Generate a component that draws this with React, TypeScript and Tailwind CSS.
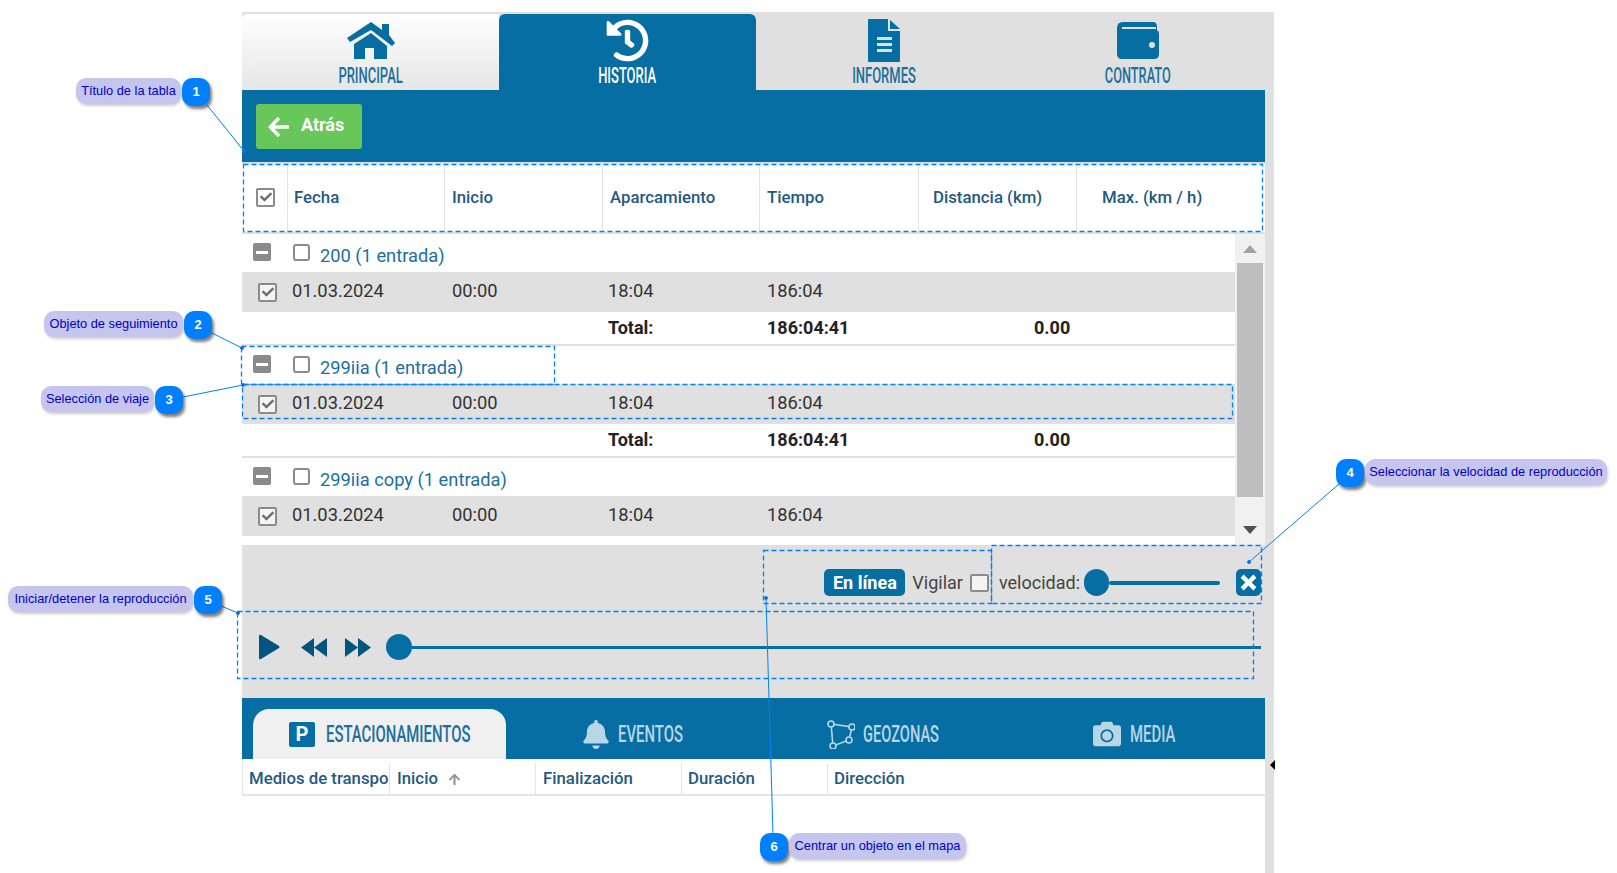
import { FaArrowUp, FaBell, FaCamera, FaCheck, FaHistory } from 'react-icons/fa';

const HouseIcon = () => (
  <svg viewBox="0 0 48 39" className="w-[48px] h-[39px] fill-[#066ea3]">
    <path d="M0 17 L24 1 L35 9 L35 3 L42 3 L42 14 L48 22 L45 25 L24 9 L3 21 Z" />
    <path d="M7 23 L24 12 L40 25 L40 38 L27 38 L27 27 L18 27 L18 38 L7 38 Z" />
  </svg>
);

const FileIcon = () => (
  <svg viewBox="0 0 32 43" className="w-[32px] h-[43px]">
    <path d="M1 0 H20 V12 H32 V42 Q32 43 31 43 H1 Q0 43 0 42 V1 Q0 0 1 0 Z" className="fill-[#066ea3]" />
    <path d="M22 1 L32 10 H22 Z" className="fill-[#066ea3]" />
    <path d="M9 18 H24 V21 H9 Z M9 24 H24 V27 H9 Z M9 30 H24 V33 H9 Z" className="fill-[#e0e0e0]" />
  </svg>
);

const WalletIcon = () => (
  <svg viewBox="0 0 42 37" className="w-[42px] h-[37px]">
    <path d="M6 0 H36 Q40 0 40 5 V8 Q42 9 42 12 V32 Q42 37 37 37 H5 Q0 37 0 32 V6 Q0 0 6 0 Z" className="fill-[#066ea3]" />
    <rect x="5" y="5" width="34" height="2" className="fill-[#e0e0e0]" />
    <circle cx="35" cy="23" r="3" className="fill-[#e0e0e0]" />
  </svg>
);

const GeoIcon = () => (
  <svg viewBox="0 0 28 29" className="w-[28px] h-[29px] fill-none stroke-[#b9d6e6] stroke-[1.6]">
    <path d="M4 4 L25 7 L22 20 L6 26 Z" />
    <circle cx="4" cy="4" r="3" className="fill-[#066ea3]" />
    <circle cx="25" cy="7" r="3" className="fill-[#066ea3]" />
    <circle cx="22" cy="20" r="3" className="fill-[#066ea3]" />
    <circle cx="6" cy="26" r="3" className="fill-[#066ea3]" />
  </svg>
);

const CheckBox = ({ checked = false, className = '' }: { checked?: boolean; className?: string }) => (
  <span className={`flex items-center justify-center border-2 border-[#8b8b8b] rounded-[2px] bg-[#f4f4f4] ${className}`}>
    {checked && <FaCheck className="text-[#6e6e6e] text-[12px]" />}
  </span>
);

const MinusBox = () => (
  <span className="flex items-center justify-center w-[18px] h-[18px] rounded-[2px] bg-[#8b8b8b]">
    <span className="w-[12px] h-[3px] bg-white" />
  </span>
);

const TopTab = ({ label, icon, scale, className }: { label: string; icon: React.ReactNode; scale: string; className: string }) => (
  <div className={`flex flex-col items-center ${className}`}>
    <div className="h-[49px] flex items-center pt-[4px]">{icon}</div>
    <span className={`text-[22px] leading-[26px] font-medium whitespace-nowrap ${scale}`}>{label}</span>
  </div>
);

const GroupRow = ({ label }: { label: string }) => (
  <div className="h-[38px] flex items-center pl-[11px] pb-[2px]">
    <MinusBox />
    <CheckBox className="ml-[22px] w-[17px] h-[17px] bg-white rounded-[3px]" />
    <span className="ml-[10px] pt-[7px] text-[18.3px] text-[#1c6f9e]">{label}</span>
  </div>
);

const TripRow = () => (
  <div className="h-[40px] pb-[2px] grid grid-cols-[50px_160px_156px_159px_1fr] items-center bg-[#e0e0e0] text-[18.3px] text-[#333]">
    <CheckBox checked className="ml-[16px] mt-[2px] w-[19px] h-[19px]" />
    <span>01.03.2024</span>
    <span>00:00</span>
    <span>18:04</span>
    <span>186:04</span>
  </div>
);

const TotalRow = () => (
  <div className="h-[34px] pb-[2px] border-b-2 border-[#e0e0e0] grid grid-cols-[366px_159px_267px_1fr] items-center text-[18px] font-bold text-[#222]">
    <span />
    <span>Total:</span>
    <span>186:04:41</span>
    <span>0.00</span>
  </div>
);

const Callout = ({ n, text, reverse = false, className, pill }: { n: number; text: string; reverse?: boolean; className: string; pill: string }) => (
  <div className={`absolute flex gap-px ${reverse ? 'flex-row-reverse' : ''} ${className}`}>
    <div className={`h-[26px] flex items-center justify-center rounded-[10px] bg-[#c5c5ee] shadow-[1px_2px_3px_rgba(0,0,0,0.2)] text-[12.8px] text-[#0000c8] whitespace-nowrap font-['Liberation_Sans',sans-serif] ${pill}`}>
      {text}
    </div>
    <div className="w-[28px] h-[28px] flex items-center justify-center rounded-[10px] bg-[#0080ff] shadow-[2px_3px_3px_rgba(0,0,0,0.5)] text-white text-[13px] font-bold font-['Liberation_Sans',sans-serif]">
      {n}
    </div>
  </div>
);

const headerCols = [
  ['w-[157px] pl-[6px]', 'Fecha'],
  ['w-[158px] pl-[7px]', 'Inicio'],
  ['w-[157px] pl-[7px]', 'Aparcamiento'],
  ['w-[159px] pl-[7px]', 'Tiempo'],
  ['w-[158px] pl-[14px]', 'Distancia (km)'],
  ['flex-1 pl-[25px]', 'Max. (km / h)'],
];

const bottomCols = [
  ['w-[147px] pl-[6px] whitespace-nowrap', 'Medios de transpo'],
  ['w-[146px] pl-[7px] flex items-center gap-[10px]', 'Inicio'],
  ['w-[146px] pl-[7px]', 'Finalización'],
  ['w-[146px] pl-[6px]', 'Duración'],
  ['flex-1 pl-[6px]', 'Dirección'],
];

export default function App() {
  return (
    <div className="relative w-[1617px] h-[873px] overflow-hidden bg-white font-['Roboto',sans-serif]">
      <div className="ml-[242px] pt-[12px]">
        <div className="w-[1032px] h-[861px] pt-[2px] pr-[9px] bg-[#e0e0e0]">
          {/* main tabs */}
          <div className="grid grid-cols-[257px_257px_256px_252px] h-[76px]">
            <TopTab label="PRINCIPAL" icon={<HouseIcon />} scale="scale-x-[0.59]" className="rounded-tl-[5px] bg-linear-to-b from-white to-[#e6e6e6] text-[#1c6f9e]" />
            <TopTab label="HISTORIA" icon={<FaHistory className="text-white text-[43px]" />} scale="scale-x-[0.59]" className="rounded-t-[6px] bg-[#066ea3] text-white" />
            <TopTab label="INFORMES" icon={<FileIcon />} scale="scale-x-[0.59]" className="text-[#1c6f9e]" />
            <TopTab label="CONTRATO" icon={<WalletIcon />} scale="scale-x-[0.58]" className="text-[#1c6f9e]" />
          </div>

          <div className="h-[72px] pl-[14px] pt-[14px] bg-[#066ea3]">
            <button className="w-[106px] h-[45px] flex items-center rounded-[3px] bg-[#68c75a] text-white text-[18px] font-bold">
              <svg viewBox="0 0 22 22" className="ml-[12px] w-[22px] h-[22px] fill-none stroke-white stroke-[3.6]">
                <path d="M21 11 H4 M11 2 L2.5 11 L11 20" />
              </svg>
              <span className="ml-[11px] -mt-[4px]">Atrás</span>
            </button>
          </div>

          {/* table header */}
          <div className="mt-[2px] h-[68px] flex items-center bg-white text-[16.8px] font-medium text-[#1f5a80]">
            <div className="w-[46px] h-full flex items-center pl-[14px] pb-[2px] border-r border-[#e3e3e3]">
              <CheckBox checked className="w-[19px] h-[19px] bg-white" />
            </div>
            {headerCols.map(([cls, text], i) => (
              <div key={text} className={`h-full flex items-center ${i < 5 ? 'border-r border-[#e3e3e3]' : ''} ${cls}`}>
                {text}
              </div>
            ))}
          </div>

          {/* trips list */}
          <div className="mt-[2px] h-[311px] flex bg-white overflow-hidden">
            <div className="w-[993px]">
              <GroupRow label="200 (1 entrada)" />
              <TripRow />
              <TotalRow />
              <GroupRow label="299iia (1 entrada)" />
              <TripRow />
              <TotalRow />
              <GroupRow label="299iia copy (1 entrada)" />
              <TripRow />
            </div>
            <div className="w-[30px] flex flex-col items-center bg-[#f1f1f1] pl-[2px] pr-[2px]">
              <div className="h-[29px] flex items-center justify-center">
                <span className="w-0 h-0 border-x-[7px] border-x-transparent border-b-[8px] border-b-[#a3a3a3]" />
              </div>
              <div className="w-full h-[234px] bg-[#bdbdbd]" />
              <div className="pt-[29px] flex justify-center">
                <span className="w-0 h-0 border-x-[7px] border-x-transparent border-t-[8px] border-t-[#505050]" />
              </div>
            </div>
          </div>

          {/* player controls */}
          <div className="h-[153px] pt-[24px] text-[18px] text-[#444]">
            <div className="h-[27px] pr-[4px] flex items-center justify-end">
              <span className="w-[81px] h-[27px] flex items-center justify-center rounded-[5px] bg-[#066ea3] text-white font-bold">En línea</span>
              <span className="ml-[7px]">Vigilar</span>
              <CheckBox className="ml-[7px] w-[19px] h-[18px]" />
              <span className="ml-[10px]">velocidad:</span>
              <div className="ml-[4px] w-[136px] flex items-center">
                <span className="w-[25px] h-[27px] rounded-full bg-[#066ea3]" />
                <span className="flex-1 h-[4px] rounded-full bg-[#066ea3]" />
              </div>
              <span className="ml-[16px] w-[25px] h-[27px] flex items-center justify-center rounded-[5px] bg-[#066ea3]">
                <svg viewBox="0 0 16 16" className="w-[17px] h-[17px] stroke-white stroke-[4] fill-none"><path d="M2 2 L14 14 M14 2 L2 14" /></svg>
              </span>
            </div>
            <div className="mt-[38px] h-[26px] pl-[16px] flex items-center">
              <svg viewBox="0 0 22 26" className="w-[22px] h-[26px] fill-[#04547f]"><path d="M1 2 Q1 0 3 1 L21 12 Q22 13 21 14 L3 25 Q1 26 1 24 Z" /></svg>
              <svg viewBox="0 0 26 19" className="ml-[21px] w-[26px] h-[19px] fill-[#04547f]"><path d="M13 0 V19 L0 9.5 Z M26 0 V19 L13 9.5 Z" /></svg>
              <svg viewBox="0 0 26 19" className="ml-[18px] w-[26px] h-[19px] fill-[#04547f]"><path d="M0 0 V19 L13 9.5 Z M13 0 V19 L26 9.5 Z" /></svg>
              <span className="ml-[15px] w-[26px] h-[26px] rounded-full bg-[#066ea3]" />
              <span className="flex-1 h-[3px] mr-[4px] bg-[#066ea3]" />
            </div>
          </div>

          {/* lower tabs */}
          <div className="h-[61px] pt-[11px] pl-[11px] grid grid-cols-4 bg-[#066ea3] text-[#b9d6e6] text-[24px] font-medium">
            <div className="w-[253px] flex items-center pl-[36px] rounded-t-[16px] bg-[#f0f0f0] text-[#1c6f9e]">
              <span className="w-[26px] h-[25px] flex items-center justify-center rounded-[2px] bg-[#066ea3] text-white text-[20px] font-bold">P</span>
              <span className="ml-[11px] w-[144px] origin-left scale-x-[0.62] whitespace-nowrap">ESTACIONAMIENTOS</span>
            </div>
            <div className="flex items-center pl-[77px]">
              <FaBell className="w-[26px] h-[29px]" />
              <span className="ml-[9px] w-[64px] origin-left scale-x-[0.62] whitespace-nowrap">EVENTOS</span>
            </div>
            <div className="flex items-center pl-[68px]">
              <GeoIcon />
              <span className="ml-[8px] w-[77px] origin-left scale-x-[0.61] whitespace-nowrap">GEOZONAS</span>
            </div>
            <div className="flex items-center pl-[80px]">
              <FaCamera className="w-[30px] h-[28px]" />
              <span className="ml-[8px] w-[46px] origin-left scale-x-[0.62] whitespace-nowrap">MEDIA</span>
            </div>
          </div>

          <div className="h-[114px] bg-white">
            <div className="h-[37px] pt-[4px] flex items-center border-b-2 border-l border-[#e5e5e5] text-[16.8px] font-medium text-[#1f5a80]">
              {bottomCols.map(([cls, text], i) => (
                <div key={text} className={`h-full flex items-center ${i < 4 ? 'border-r border-[#e5e5e5]' : ''} ${cls}`}>
                  {text}
                  {i === 1 && <FaArrowUp className="text-[#9a9089] text-[13px] mt-[2px]" />}
                </div>
              ))}
            </div>
          </div>
        </div>
      </div>

      {/* splitter arrow */}
      <span className="absolute left-[1270px] top-[760px] w-0 h-0 border-y-[5px] border-y-transparent border-r-[5px] border-r-black" />

      {/* help annotations */}
      <svg viewBox="0 0 1617 873" className="absolute inset-0 w-[1617px] h-[873px] pointer-events-none stroke-[#0080ff] fill-[#4a4ad0]">
        <g className="fill-none stroke-[1.3] [stroke-dasharray:5_3]">
          <rect x="243.5" y="164.5" width="1019" height="67" />
          <rect x="241.5" y="346.5" width="313" height="38" />
          <rect x="242.5" y="384.5" width="990" height="34" />
          <rect x="763.5" y="550.5" width="228" height="53" />
          <rect x="991.5" y="545.5" width="270" height="58" />
          <rect x="237.5" y="611.5" width="1016" height="67" />
        </g>
        <line x1="207" y1="105" x2="244" y2="151" />
        <circle cx="244" cy="151" r="1.5" />
        <line x1="212" y1="333" x2="242" y2="348" />
        <circle cx="242" cy="348" r="1.5" />
        <line x1="183" y1="397" x2="243" y2="385" />
        <circle cx="243" cy="385" r="1.5" />
        <line x1="1339" y1="484" x2="1249" y2="562" />
        <circle cx="1249" cy="562" r="1.5" />
        <line x1="221" y1="606" x2="238" y2="613" />
        <circle cx="238" cy="613" r="1.5" />
        <line x1="773" y1="834" x2="766" y2="598" />
        <circle cx="766" cy="598" r="1.5" />
      </svg>

      <Callout n={1} text="Título de la tabla" className="left-[76px] top-[78px]" pill="w-[105px]" />
      <Callout n={2} text="Objeto de seguimiento" className="left-[44px] top-[311px]" pill="w-[139px]" />
      <Callout n={3} text="Selección de viaje" className="left-[41px] top-[386px]" pill="w-[113px]" />
      <Callout n={4} text="Seleccionar la velocidad de reproducción" reverse className="left-[1336px] top-[459px]" pill="w-[242px]" />
      <Callout n={5} text="Iniciar/detener la reproducción" className="left-[8px] top-[586px]" pill="w-[185px]" />
      <Callout n={6} text="Centrar un objeto en el mapa" reverse className="left-[760px] top-[833px]" pill="w-[177px]" />
    </div>
  );
}
